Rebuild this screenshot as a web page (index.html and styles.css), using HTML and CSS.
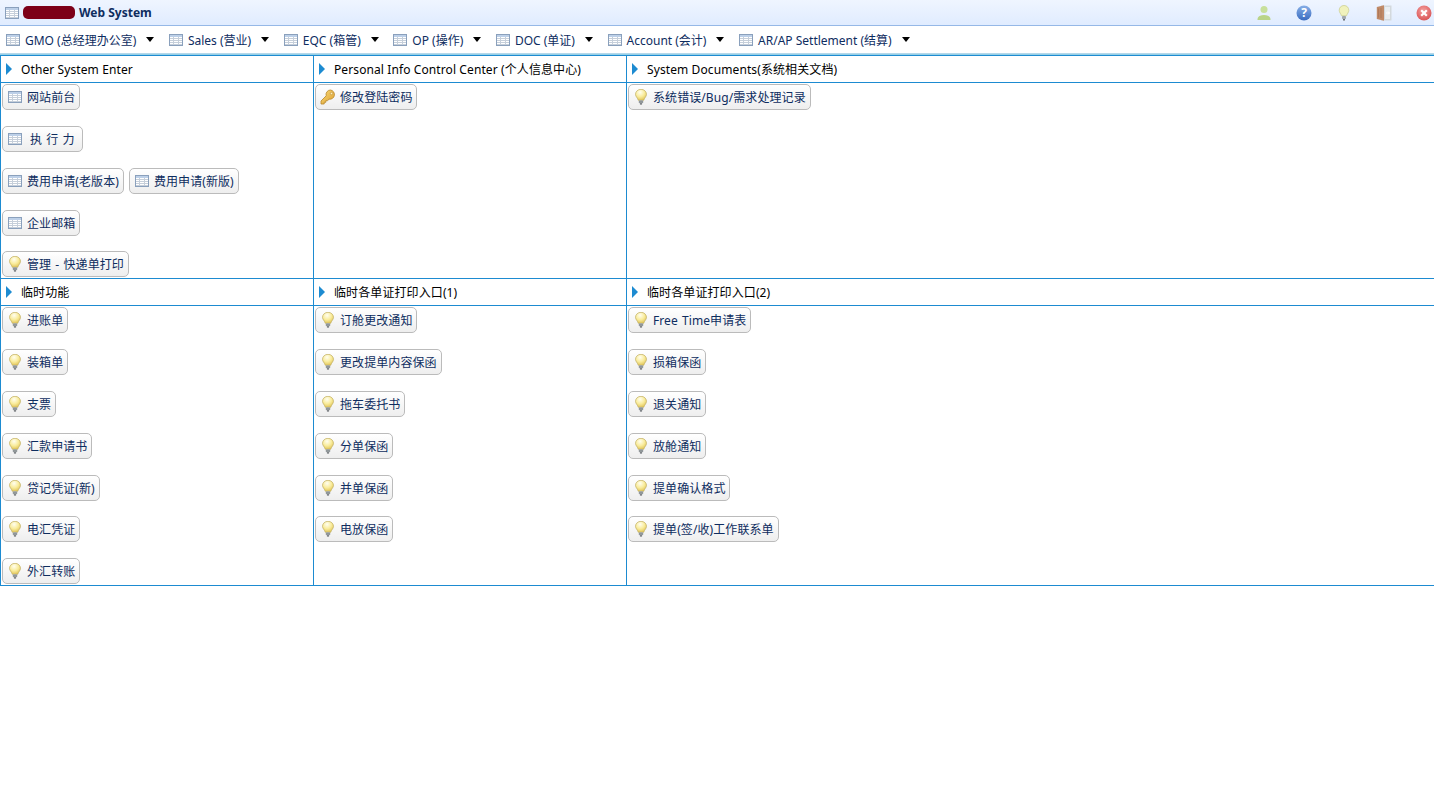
FILE: index.html
```html
<!DOCTYPE html>
<html lang="zh-CN">
<head>
  <meta charset="UTF-8" />
  <title>Web System</title>
  <link rel="stylesheet" href="styles.css">
</head>
<body>
  <svg class="defs" width="0" height="0">
    <defs>
      <radialGradient id="bulb-fill" cx=".42" cy=".28" r=".8">
        <stop offset="0" stop-color="#fffef0"/>
        <stop offset=".5" stop-color="#f9ec9c"/>
        <stop offset="1" stop-color="#dcbc4a"/>
      </radialGradient>
      <linearGradient id="key-fill" x1="0" y1="0" x2="1" y2="1">
        <stop offset="0" stop-color="#f8dc7c"/>
        <stop offset="1" stop-color="#dd9e2c"/>
      </linearGradient>
      <linearGradient id="help-fill" x1="0" y1="0" x2="0" y2="1">
        <stop offset="0" stop-color="#86aee6"/>
        <stop offset="1" stop-color="#3a6cc0"/>
      </linearGradient>
      <radialGradient id="close-fill" cx=".45" cy=".35" r=".75">
        <stop offset="0" stop-color="#f4a0a0"/>
        <stop offset="1" stop-color="#d64a4a"/>
      </radialGradient>
      <symbol id="i-table" viewBox="0 0 16 16">
        <rect x="1.500" y="2.500" width="13" height="11" fill="#fff" stroke="#8aa0bc"/>
        <rect x="2" y="3" width="12" height="2" fill="#bdd0e8"/>
        <path d="M2 6.500h12M2 8.500h12M2 10.500h12M2 12.500h12M5.500 5v8M10.500 5v8" stroke="#c6cfda" fill="none"/>
      </symbol>
      <symbol id="i-bulb" viewBox="0 0 16 16">
        <path d="M8 .3c-3.100 0-5.500 2.300-5.500 5 0 2.400 2.200 3.600 2.800 6h5.400c.6-2.400 2.800-3.600 2.800-6C13.500 2.600 11.100.3 8 .3z" fill="url(#bulb-fill)" stroke="#bfae62" stroke-width=".7"/>
        <rect x="5.800" y="11.300" width="4.400" height="2.900" rx=".8" fill="#a4a9ad"/>
        <path d="M5.900 12.300h4.200M5.900 13.300h4.200" stroke="#7a8085" stroke-width=".5"/>
        <rect x="6.900" y="14.200" width="2.200" height="1.400" rx=".6" fill="#565b60"/>
      </symbol>
      <symbol id="i-key" viewBox="0 0 16 16">
        <path d="M10.500 1a4.500 4.500 0 0 0-4.300 5.800L1 12v3h3.200v-1.700h1.700v-1.700h1.700l1.500-1.400A4.500 4.500 0 1 0 10.500 1z" fill="url(#key-fill)" stroke="#b8862a" stroke-width=".8"/>
        <circle cx="11.500" cy="4.500" r="1.200" fill="#fff3c4" stroke="#b8862a" stroke-width=".6"/>
      </symbol>
    </defs>
  </svg>

  <header class="titlebar">
    <svg class="ico"><use href="#i-table"/></svg>
    <span class="redact"></span>
    <span class="title">Web System</span>
    <div class="tools">
      <svg class="tool" viewBox="0 0 16 16"><circle cx="8" cy="4.500" r="3.500" fill="#c8e09c"/><path d="M1.500 15c0-1 0-3 2-4 1.500-.8 3-1 4.500-1s3 .2 4.500 1c2 1 2 3 2 4z" fill="#b9d488"/></svg>
      <svg class="tool" viewBox="0 0 16 16"><circle cx="8" cy="8" r="7.500" fill="url(#help-fill)"/><text x="8" y="12.300" class="tool-q">?</text></svg>
      <svg class="tool" viewBox="0 0 16 16"><path d="M8 .5c-3 0-4.800 2.200-4.800 4.800 0 2.200 1.700 3.400 2.200 5.400h5.200c.5-2 2.200-3.200 2.200-5.400C12.800 2.700 11 .5 8 .5z" fill="#f0f2bc" stroke="#c8cc8a" stroke-width=".7"/><rect x="6" y="11" width="4" height="3" rx=".8" fill="#a2a9ae"/><rect x="7" y="14" width="2" height="1.500" fill="#6a7075"/></svg>
      <svg class="tool" viewBox="0 0 16 16"><rect x="5" y=".5" width="10.500" height="15" fill="#d3d9dd"/><rect x="9" y="2" width="5" height="12" fill="#e9edf0"/><path d="M.8 2L8 .3v15.400L.8 14z" fill="#c08a68"/><path d="M2.500 3.500v9M5 3v10" stroke="#a87254" stroke-width=".7"/><path d="M10 8h3.500M12 6.500L13.500 8 12 9.500" stroke="#fff" fill="none"/></svg>
      <svg class="tool" viewBox="0 0 16 16"><circle cx="8" cy="8" r="7.500" fill="url(#close-fill)"/><path d="M5.200 5.200l5.600 5.600M10.800 5.200l-5.600 5.600" stroke="#fff" stroke-width="2.200"/></svg>
    </div>
  </header>

  <nav class="menubar">
    <a class="menu"><svg class="ico"><use href="#i-table"/></svg>GMO (总经理办公室)<i class="caret"></i></a>
    <a class="menu"><svg class="ico"><use href="#i-table"/></svg>Sales (营业)<i class="caret"></i></a>
    <a class="menu"><svg class="ico"><use href="#i-table"/></svg>EQC (箱管)<i class="caret"></i></a>
    <a class="menu"><svg class="ico"><use href="#i-table"/></svg>OP (操作)<i class="caret"></i></a>
    <a class="menu"><svg class="ico"><use href="#i-table"/></svg>DOC (单证)<i class="caret"></i></a>
    <a class="menu"><svg class="ico"><use href="#i-table"/></svg>Account (会计)<i class="caret"></i></a>
    <a class="menu"><svg class="ico"><use href="#i-table"/></svg>AR/AP Settlement (结算)<i class="caret"></i></a>
  </nav>

  <main class="board">
    <section class="panel">
      <h2 class="panel-head"><i class="arrow"></i>Other System Enter</h2>
      <div class="panel-body">
        <div class="row"><a class="btn"><svg class="ico"><use href="#i-table"/></svg>网站前台</a></div>
        <div class="row"><a class="btn btn-spaced"><svg class="ico"><use href="#i-table"/></svg>执 行 力</a></div>
        <div class="row"><a class="btn"><svg class="ico"><use href="#i-table"/></svg>费用申请(老版本)</a><a class="btn"><svg class="ico"><use href="#i-table"/></svg>费用申请(新版)</a></div>
        <div class="row"><a class="btn"><svg class="ico"><use href="#i-table"/></svg>企业邮箱</a></div>
        <div class="row"><a class="btn"><svg class="ico"><use href="#i-bulb"/></svg>管理 - 快递单打印</a></div>
      </div>
    </section>
    <section class="panel">
      <h2 class="panel-head"><i class="arrow"></i>Personal Info Control Center (个人信息中心)</h2>
      <div class="panel-body">
        <div class="row"><a class="btn"><svg class="ico"><use href="#i-key"/></svg>修改登陆密码</a></div>
      </div>
    </section>
    <section class="panel">
      <h2 class="panel-head"><i class="arrow"></i>System Documents(系统相关文档)</h2>
      <div class="panel-body">
        <div class="row"><a class="btn"><svg class="ico"><use href="#i-bulb"/></svg>系统错误/Bug/需求处理记录</a></div>
      </div>
    </section>

    <section class="panel">
      <h2 class="panel-head"><i class="arrow"></i>临时功能</h2>
      <div class="panel-body">
        <div class="row"><a class="btn"><svg class="ico"><use href="#i-bulb"/></svg>进账单</a></div>
        <div class="row"><a class="btn"><svg class="ico"><use href="#i-bulb"/></svg>装箱单</a></div>
        <div class="row"><a class="btn"><svg class="ico"><use href="#i-bulb"/></svg>支票</a></div>
        <div class="row"><a class="btn"><svg class="ico"><use href="#i-bulb"/></svg>汇款申请书</a></div>
        <div class="row"><a class="btn"><svg class="ico"><use href="#i-bulb"/></svg>贷记凭证(新)</a></div>
        <div class="row"><a class="btn"><svg class="ico"><use href="#i-bulb"/></svg>电汇凭证</a></div>
        <div class="row"><a class="btn"><svg class="ico"><use href="#i-bulb"/></svg>外汇转账</a></div>
      </div>
    </section>
    <section class="panel">
      <h2 class="panel-head"><i class="arrow"></i>临时各单证打印入口(1)</h2>
      <div class="panel-body">
        <div class="row"><a class="btn"><svg class="ico"><use href="#i-bulb"/></svg>订舱更改通知</a></div>
        <div class="row"><a class="btn"><svg class="ico"><use href="#i-bulb"/></svg>更改提单内容保函</a></div>
        <div class="row"><a class="btn"><svg class="ico"><use href="#i-bulb"/></svg>拖车委托书</a></div>
        <div class="row"><a class="btn"><svg class="ico"><use href="#i-bulb"/></svg>分单保函</a></div>
        <div class="row"><a class="btn"><svg class="ico"><use href="#i-bulb"/></svg>并单保函</a></div>
        <div class="row"><a class="btn"><svg class="ico"><use href="#i-bulb"/></svg>电放保函</a></div>
      </div>
    </section>
    <section class="panel">
      <h2 class="panel-head"><i class="arrow"></i>临时各单证打印入口(2)</h2>
      <div class="panel-body">
        <div class="row"><a class="btn"><svg class="ico"><use href="#i-bulb"/></svg>Free Time申请表</a></div>
        <div class="row"><a class="btn"><svg class="ico"><use href="#i-bulb"/></svg>损箱保函</a></div>
        <div class="row"><a class="btn"><svg class="ico"><use href="#i-bulb"/></svg>退关通知</a></div>
        <div class="row"><a class="btn"><svg class="ico"><use href="#i-bulb"/></svg>放舱通知</a></div>
        <div class="row"><a class="btn"><svg class="ico"><use href="#i-bulb"/></svg>提单确认格式</a></div>
        <div class="row"><a class="btn"><svg class="ico"><use href="#i-bulb"/></svg>提单(签/收)工作联系单</a></div>
      </div>
    </section>
  </main>
</body>
</html>
```

FILE: styles.css
```css
* {
  box-sizing: border-box;
}
body {
  margin: 0;
  font-family: "Noto Sans", "Noto Sans CJK SC", sans-serif;
  font-size: 12px;
  color: #0e2d5f;
  background: #fff;
}
.defs {
  display: block;
  height: 0;
}
.ico {
  width: 16px;
  height: 16px;
  flex: none;
}
.titlebar {
  height: 26px;
  display: flex;
  align-items: center;
  padding-left: 4px;
  background: linear-gradient(to bottom, #eff5ff, #e0ecff);
  border-bottom: 1px solid #95b8e7;
}
.redact {
  width: 52px;
  height: 13px;
  margin-left: 3px;
  border-radius: 5px;
  background: #7d0018;
}
.title {
  margin-left: 4px;
  font-weight: bold;
}
.tools {
  margin-left: auto;
  display: flex;
  gap: 24px;
  padding-right: 2px;
}
.tool {
  width: 16px;
  height: 16px;
}
.tool-q {
  font-size: 12px;
  font-weight: bold;
  fill: #fff;
  text-anchor: middle;
}
.menubar {
  height: 29px;
  display: flex;
  align-items: center;
  gap: 13.6px;
  padding: 0 0 1px 5px;
  border-bottom: 1px solid #95d0e7;
  box-shadow: inset 0 -1px 0 #b5d8ea;
}
.menu {
  display: flex;
  align-items: center;
  gap: 4px;
}
.caret {
  width: 0;
  height: 0;
  margin-left: 6px;
  border-left: 4px solid transparent;
  border-right: 4px solid transparent;
  border-top: 5px solid #000;
}
.board {
  width: 1434px;
  display: grid;
  grid-template-columns: 313px 313px 1fr;
  grid-template-rows: 223.2px 306.8px;
  border-top: 1px solid #1d8bd1;
}
.panel {
  border-left: 1px solid #1d8bd1;
  border-bottom: 1px solid #1d8bd1;
}
.panel-head {
  margin: 0;
  height: 27px;
  display: flex;
  align-items: center;
  padding-left: 5px;
  font-size: 12px;
  font-weight: normal;
  letter-spacing: 0.1px;
  color: #000;
  border-bottom: 1px solid #1d8bd1;
}
.arrow {
  width: 0;
  height: 0;
  margin-right: 9px;
  border-top: 6px solid transparent;
  border-bottom: 6px solid transparent;
  border-left: 6px solid #1d8bd1;
}
.panel-body {
  padding-top: 1px;
}
.row {
  height: 41.85px;
  display: flex;
  align-items: flex-start;
  gap: 5px;
  padding-left: 1px;
}
.btn {
  height: 26px;
  display: inline-flex;
  align-items: center;
  gap: 4px;
  padding: 0 4px;
  border: 1px solid #bbb;
  border-radius: 5px;
  background: linear-gradient(to bottom, #fff, #eee);
  white-space: nowrap;
  word-spacing: 1px;
  letter-spacing: 0.08px;
}
.btn-spaced {
  padding: 0 7px 0 4px;
  gap: 7px;
}
```
